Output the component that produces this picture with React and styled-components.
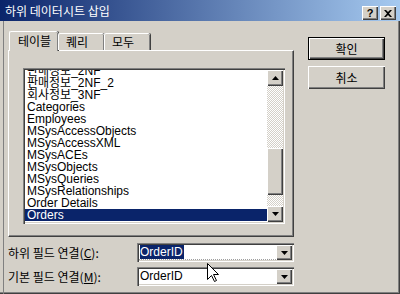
import React from "react";
import styled, { createGlobalStyle } from "styled-components";

const FACE = "#d4d0c8";
const SHADOW = "#808080";
const DARK = "#404040";
const NAVY = "#0a246a";

const GlobalStyle = createGlobalStyle`
  html, body {
    margin: 0;
    padding: 0;
    background: ${FACE};
  }
  body {
    font-family: "Liberation Sans", "Noto Sans CJK KR", sans-serif;
    font-size: 12px;
  }
`;

const tables = [
  "판매정보_2NF",
  "판매정보_2NF_2",
  "회사정보_3NF",
  "Categories",
  "Employees",
  "MSysAccessObjects",
  "MSysAccessXML",
  "MSysACEs",
  "MSysObjects",
  "MSysQueries",
  "MSysRelationships",
  "Order Details",
  "Orders",
];

const Arrow = ({ up }) => (
  <svg width="7" height="4" viewBox="0 0 7 4">
    <path d={up ? "M3.5 0 L7 4 L0 4 Z" : "M0 0 L7 0 L3.5 4 Z"} fill="#000" />
  </svg>
);

export default function App() {
  return (
    <>
      <GlobalStyle />
      <Window>
        <TitleBar>
          <Title>하위 데이터시트 삽입</Title>
          <CaptionButtons>
            <CaptionButton>
              <HelpMark>?</HelpMark>
            </CaptionButton>
            <CaptionButton>
              <svg width="8" height="7" viewBox="0 0 8 7">
                <path
                  d="M0 0 L2 0 L4 2 L6 0 L8 0 L5 3.5 L8 7 L6 7 L4 5 L2 7 L0 7 L3 3.5 Z"
                  fill="#000"
                />
              </svg>
            </CaptionButton>
          </CaptionButtons>
        </TitleBar>
        <Body>
          <LeftColumn>
            <TabStrip>
              <Tab $active>테이블</Tab>
              <Tab>퀘리</Tab>
              <Tab>모두</Tab>
            </TabStrip>
            <TabPanel>
              <ListBox>
                <ListItems>
                  <ListScroller>
                    {tables.map((name) => (
                      <ListItem key={name} $selected={name === "Orders"}>
                        {name}
                      </ListItem>
                    ))}
                  </ListScroller>
                </ListItems>
                <ScrollBar>
                  <ScrollButton>
                    <Arrow up />
                  </ScrollButton>
                  <Track style={{ height: 62 }} />
                  <Thumb />
                  <Track style={{ height: 11 }} />
                  <ScrollButton>
                    <Arrow />
                  </ScrollButton>
                </ScrollBar>
              </ListBox>
            </TabPanel>
            <FieldRow $top={6}>
              <FieldLabel>
                하위 필드 연결(<u>C</u>):
              </FieldLabel>
              <Combo>
                <ComboText $focused>
                  <Selected>OrderID</Selected>
                </ComboText>
                <DropButton>
                  <Arrow />
                </DropButton>
              </Combo>
            </FieldRow>
            <FieldRow $top={5}>
              <FieldLabel>
                기본 필드 연결(<u>M</u>):
              </FieldLabel>
              <Combo>
                <ComboText>OrderID</ComboText>
                <DropButton>
                  <Arrow />
                </DropButton>
              </Combo>
            </FieldRow>
          </LeftColumn>
          <ButtonColumn>
            <PushButton $default>확인</PushButton>
            <PushButton>취소</PushButton>
          </ButtonColumn>
        </Body>
        <Cursor width="12" height="20" viewBox="0 0 12 20">
          <path
            d="M0.5 0.5 L0.5 16.5 L4.5 12.5 L7.5 18.5 L9.5 17.5 L6.5 11.5 L11.5 11.5 Z"
            fill="#fff"
            stroke="#000"
            strokeWidth="1"
          />
        </Cursor>
      </Window>
    </>
  );
}

const Window = styled.div`
  position: relative;
  width: 400px;
  height: 294px;
  overflow: hidden;
  background: ${FACE};
  box-shadow: inset -1px -1px ${DARK}, inset -2px -2px ${SHADOW};
`;

const TitleBar = styled.div`
  height: 21px;
  display: flex;
  align-items: flex-end;
  justify-content: space-between;
  padding: 0 5px 1px 5px;
  box-sizing: border-box;
  background: linear-gradient(to right, ${NAVY}, #a6caf0);
`;

const Title = styled.div`
  color: #fff;
  font-family: "Noto Sans CJK KR", sans-serif;
  font-size: 12px;
  line-height: 16px;
  margin-bottom: 1px;
`;

const CaptionButtons = styled.div`
  display: flex;
  gap: 2px;
  margin-right: -1px;
`;

const CaptionButton = styled.div`
  width: 16px;
  height: 14px;
  box-sizing: border-box;
  background: ${FACE};
  box-shadow: inset 1px 1px #fff, inset -1px -1px ${DARK},
    inset -2px -2px ${SHADOW};
  display: flex;
  align-items: center;
  justify-content: center;
`;

const HelpMark = styled.span`
  font-family: "Liberation Sans", sans-serif;
  font-weight: bold;
  font-size: 11px;
  line-height: 11px;
  color: #000;
`;

const Body = styled.div`
  display: flex;
  margin-left: 3px;
  border-left: 1px solid ${SHADOW};
  padding: 10px 0 0 4px;
  height: 273px;
  box-sizing: border-box;
`;

const LeftColumn = styled.div`
  width: 286px;
  display: flex;
  flex-direction: column;
`;

const TabStrip = styled.div`
  display: flex;
  align-items: flex-end;
  height: 19px;
  padding-left: 1px;
  position: relative;
  z-index: 1;
`;

const Tab = styled.div`
  width: ${({ $active }) => ($active ? 49 : 46)}px;
  height: ${({ $active }) => ($active ? 20 : 17)}px;
  margin-bottom: ${({ $active }) => ($active ? -1 : 0)}px;
  box-sizing: border-box;
  padding-left: ${({ $active }) => ($active ? 8 : 7)}px;
  background: ${FACE};
  border-top: 1px solid #fff;
  border-left: 1px solid #fff;
  border-radius: 2px 2px 0 0;
  box-shadow: inset -1px 0 ${SHADOW}, 1px 0 ${DARK};
  font-family: "Noto Sans CJK KR", sans-serif;
  font-size: 12px;
  line-height: ${({ $active }) => ($active ? 17 : 15)}px;
  color: #000;
`;

const TabPanel = styled.div`
  width: 286px;
  height: 187px;
  box-sizing: border-box;
  border-top: 1px solid #fff;
  border-left: 1px solid #fff;
  border-right: 1px solid ${DARK};
  border-bottom: 1px solid ${DARK};
  box-shadow: inset -1px -1px ${SHADOW};
  padding: 17px 0 0 14px;
`;

const ListBox = styled.div`
  width: 262px;
  height: 156px;
  box-sizing: border-box;
  padding: 2px;
  display: flex;
  background: #fff;
  box-shadow: inset 1px 1px ${SHADOW}, inset 2px 2px ${DARK},
    inset -1px -1px #fff, inset -2px -2px ${FACE};
`;

const ListItems = styled.div`
  flex: 1;
  overflow: hidden;
  background: #fff;
`;

const ListScroller = styled.div`
  margin-top: -5px;
`;

const ListItem = styled.div`
  height: 12px;
  line-height: 12px;
  padding-left: 2px;
  font-size: 12px;
  white-space: nowrap;
  color: ${({ $selected }) => ($selected ? "#fff" : "#000")};
  background: ${({ $selected }) => ($selected ? NAVY : "transparent")};
`;

const ScrollBar = styled.div`
  width: 16px;
  display: flex;
  flex-direction: column;
`;

const raised = `
  background: ${FACE};
  box-shadow: inset 1px 1px #fff, inset -1px -1px ${DARK},
    inset -2px -2px ${SHADOW};
`;

const ScrollButton = styled.div`
  height: 16px;
  ${raised}
  display: flex;
  align-items: center;
  justify-content: center;
`;

const Track = styled.div`
  background-image: conic-gradient(
    #fff 25%,
    ${FACE} 0 50%,
    #fff 0 75%,
    ${FACE} 0
  );
  background-size: 2px 2px;
`;

const Thumb = styled.div`
  height: 47px;
  ${raised}
`;

const FieldRow = styled.div`
  display: flex;
  align-items: center;
  margin-top: ${({ $top }) => $top}px;
`;

const FieldLabel = styled.div`
  width: 129px;
  font-family: "Noto Sans CJK KR", sans-serif;
  font-size: 12px;
  line-height: 19px;
  color: #000;

  u {
    text-underline-offset: 1px;
  }
`;

const Combo = styled.div`
  width: 157px;
  height: 19px;
  box-sizing: border-box;
  padding: 2px;
  display: flex;
  background: #fff;
  box-shadow: inset 1px 1px ${SHADOW}, inset 2px 2px ${DARK},
    inset -1px -1px #fff, inset -2px -2px ${FACE};
`;

const ComboText = styled.div`
  flex: 1;
  padding-left: 1px;
  font-size: 12px;
  line-height: 14px;
  color: #000;
  border-bottom: 1px dotted
    ${({ $focused }) => ($focused ? "#a0a0a0" : "transparent")};
`;

const Selected = styled.span`
  display: inline-block;
  background: ${NAVY};
  color: #fff;
  padding-right: 1px;
`;

const DropButton = styled.div`
  width: 16px;
  ${raised}
  display: flex;
  align-items: center;
  justify-content: center;
`;

const ButtonColumn = styled.div`
  display: flex;
  flex-direction: column;
  gap: 6px;
  margin-left: 14px;
  padding-top: 6px;
`;

const PushButton = styled.div`
  width: 77px;
  height: 23px;
  box-sizing: border-box;
  display: flex;
  align-items: center;
  justify-content: center;
  font-family: "Noto Sans CJK KR", sans-serif;
  font-size: 12px;
  color: #000;
  background: ${FACE};
  border: 1px solid ${({ $default }) => ($default ? "#000" : "transparent")};
  box-shadow: ${({ $default }) =>
    $default
      ? `inset 1px 1px #fff, inset -1px -1px ${DARK}, inset -2px -2px ${SHADOW}`
      : `inset 1px 1px #fff, inset -1px -1px ${DARK}, inset -2px -2px ${SHADOW}`};
  ${({ $default }) =>
    !$default &&
    `
    border: none;
    box-shadow: inset 1px 1px #fff, inset -1px -1px ${DARK}, inset -2px -2px ${SHADOW};
  `}
`;

const Cursor = styled.svg`
  position: absolute;
  left: 207px;
  top: 263px;
`;
